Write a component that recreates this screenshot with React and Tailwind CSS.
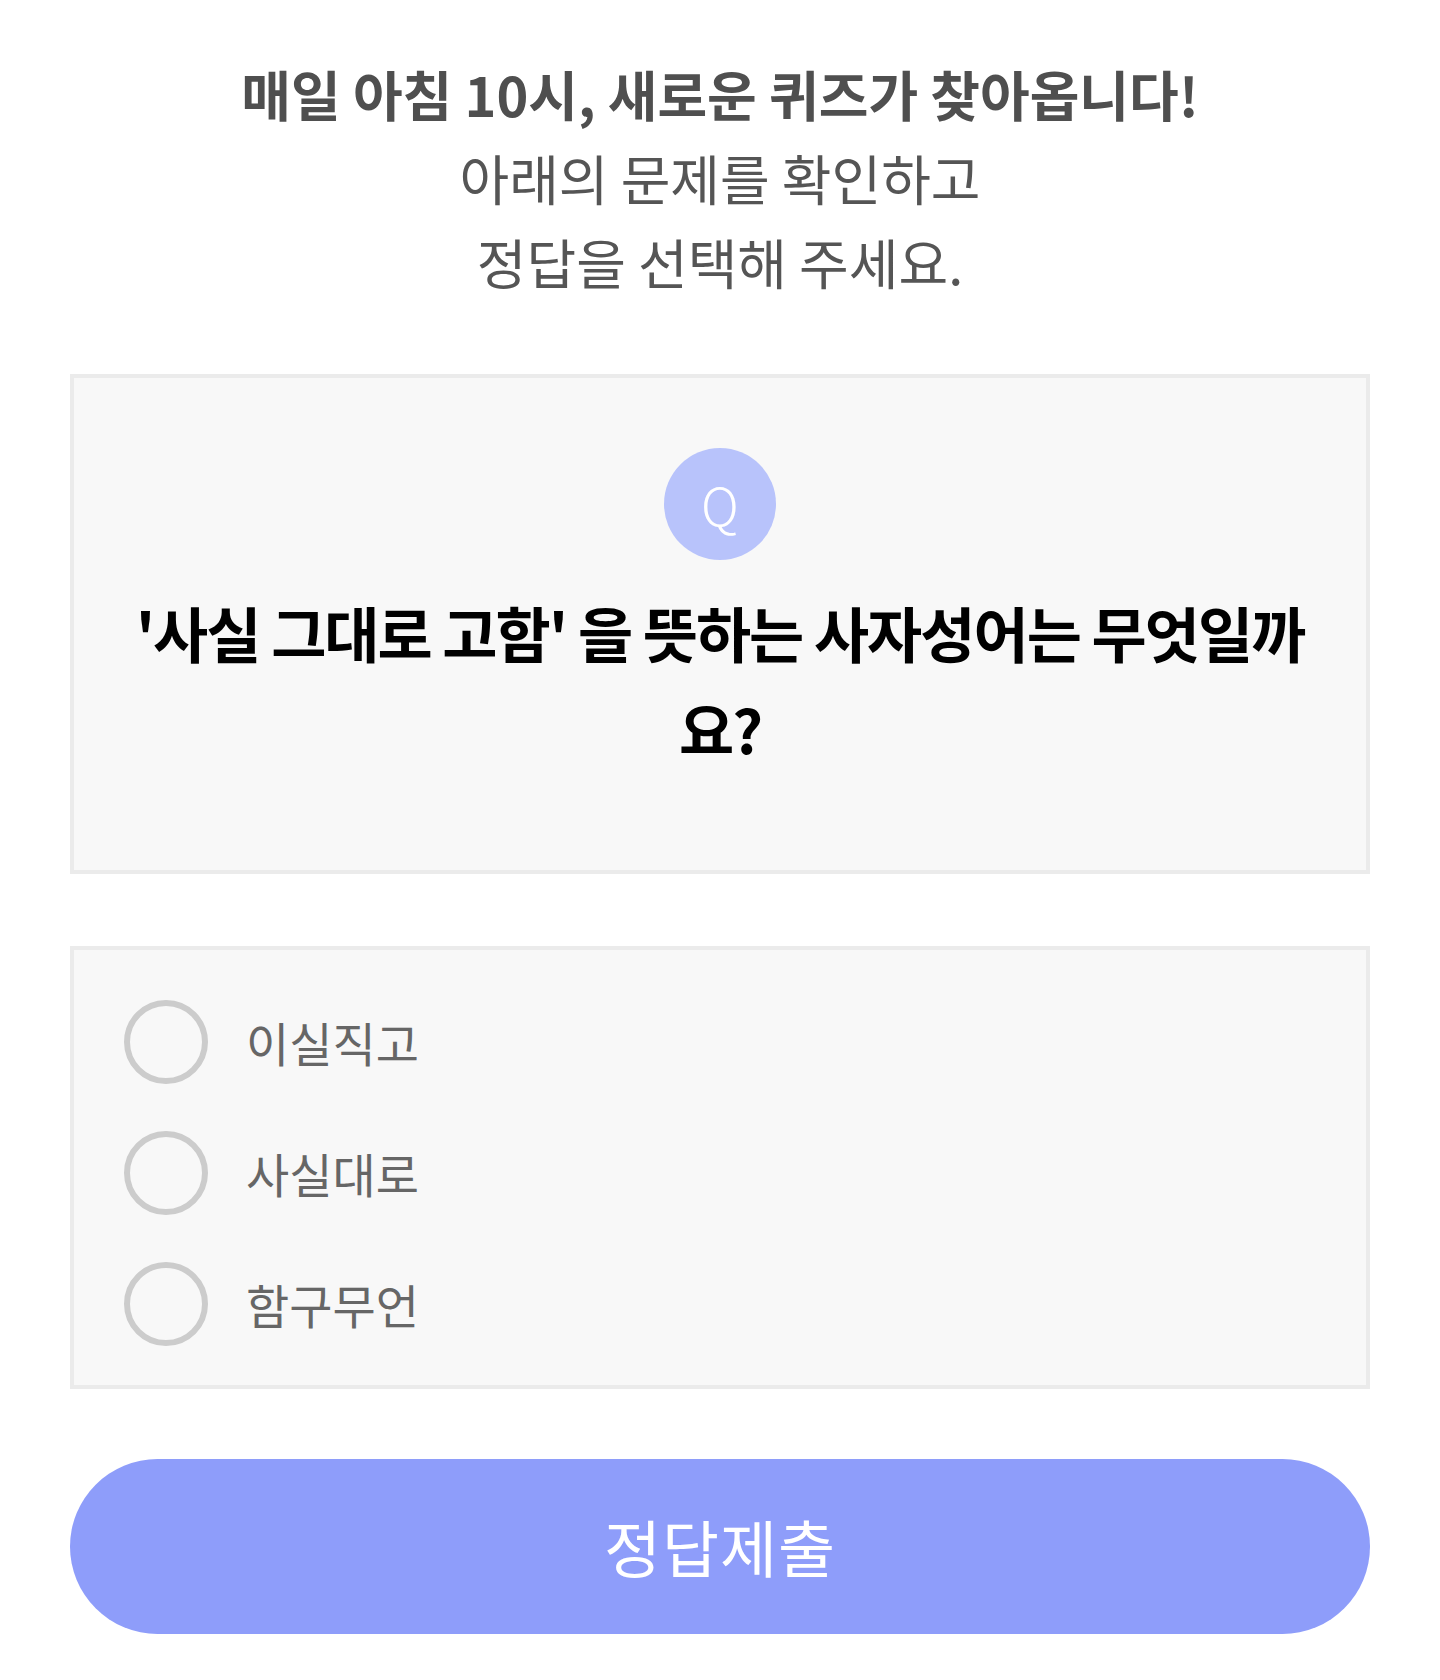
import React, { useState } from "react";

const options = ["이실직고", "사실대로", "함구무언"];

export default function App() {
  const [selected, setSelected] = useState(null);

  return (
    <div
      className="min-h-[1680px] bg-white px-[70px] pt-[52px]"
      style={{ fontFamily: '"Noto Sans CJK KR", "Noto Sans", sans-serif' }}
    >
      {/* intro text */}
      <header className="text-center text-[54px] leading-[84px] text-[#555555]">
        <p className="font-bold text-[#4f4f4f]">매일 아침 10시, 새로운 퀴즈가 찾아옵니다!</p>
        <p>아래의 문제를 확인하고</p>
        <p>정답을 선택해 주세요.</p>
      </header>

      {/* question card */}
      <section className="mt-[70px] h-[500px] border-4 border-[#ebebeb] bg-[#f8f8f8] pt-[70px] flex flex-col items-center">
        <div className="w-[112px] h-[112px] rounded-full bg-[#b8c3fb] flex items-center justify-center text-white text-[52px] font-light">
          Q
        </div>
        <h1 className="mt-[24px] px-[50px] text-center text-[60px] leading-[96px] font-bold text-black tracking-[-2px]">
          '사실 그대로 고함' 을 뜻하는 사자성어는 무엇일까요?
        </h1>
      </section>

      {/* options */}
      <section className="mt-[72px] border-4 border-[#ebebeb] bg-[#f8f8f8] px-[50px] pt-[50px] pb-[39px] flex flex-col gap-[47px]">
        {options.map((opt, i) => (
          <label key={opt} className="flex items-center gap-[38px] cursor-pointer" onClick={() => setSelected(i)}>
            <span
              className={
                "w-[84px] h-[84px] rounded-full border-[6px] flex items-center justify-center " +
                (selected === i ? "border-[#8f9efa]" : "border-[#cccccc]")
              }
            >
              {selected === i && <span className="w-[44px] h-[44px] rounded-full bg-[#8f9efa]" />}
            </span>
            <span className="text-[47px] text-[#666666]">{opt}</span>
          </label>
        ))}
      </section>

      {/* submit */}
      <button className="mt-[70px] w-full h-[175px] rounded-full bg-[#8e9dfa] text-white text-[62px] tracking-[1px]">
        정답제출
      </button>
    </div>
  );
}
